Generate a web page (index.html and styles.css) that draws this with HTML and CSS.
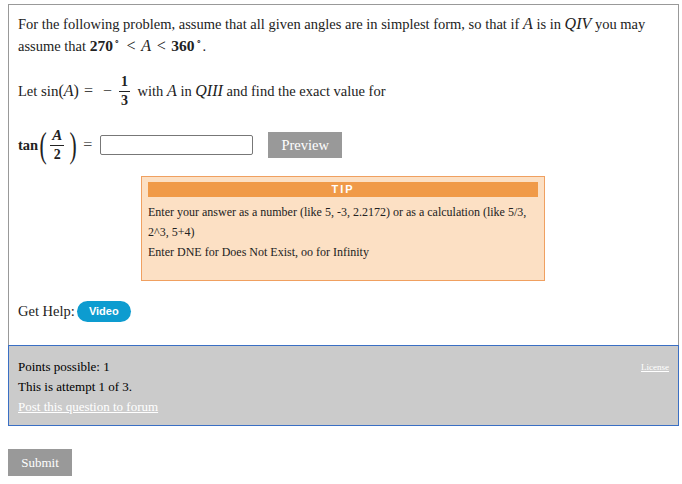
FILE: index.html
```html
<!DOCTYPE html>
<html>
<head>
<meta charset="utf-8">
<link rel="stylesheet" href="styles.css">
</head>
<body>
<div class="question">
  <div class="qbody">
    <p class="intro">For the following problem, assume that all given angles are in simplest form, so that if <i class="mv">A</i> is in <i class="mv">QIV</i> you may assume that <b class="mn">270</b><span class="deg">∘</span> <span class="mo">&lt;</span> <i class="mv">A</i> <span class="mo">&lt;</span> <b class="mn">360</b><span class="deg">∘</span>.</p>
    <p class="let">Let <span class="mf">sin</span><span class="mp">(</span><i class="mv">A</i><span class="mp">)</span> <span class="mo lo">=</span> <span class="mo lo">−</span><span class="frac"><span class="num">1</span><span class="den">3</span></span> with <i class="mv">A</i> in <i class="mv">QIII</i> and find the exact value for</p>
    <div class="answer">
      <span class="mf">tan</span><span class="bigp">(</span><span class="frac"><i class="num mv">A</i><span class="den">2</span></span><span class="bigp">)</span>
      <span class="mo eq">=</span>
      <input class="ans" type="text">
      <button class="preview">Preview</button>
    </div>
    <div class="tip">
      <div class="tiphead">TIP</div>
      <div class="tiptext">Enter your answer as a number (like 5, -3, 2.2172) or as a calculation (like 5/3, 2^3, 5+4)<br>Enter DNE for Does Not Exist, oo for Infinity</div>
    </div>
    <div class="help">Get Help: <span class="video">Video</span></div>
  </div>
  <div class="footer">
    <div class="frow"><span>Points possible: 1</span><a class="license" href="#">License</a></div>
    <div class="frow">This is attempt 1 of 3.</div>
    <div class="frow"><a class="forum" href="#">Post this question to forum</a></div>
  </div>
</div>
<button class="submit">Submit</button>
</body>
</html>
```
FILE: styles.css
```css
html, body { background: #fff; }
body {
  margin: 4px 3px 0 8px;
  font-family: "Liberation Serif", "Times New Roman", serif;
  font-size: 14.5px;
  color: #222;
}
.question {
  width: 671px;
  box-sizing: border-box;
}
.qbody {
  border: 1px solid #999;
  border-bottom: none;
  padding: 8px 9px 24px 9px;
}
p { margin: 0; }
.intro { line-height: 22px; }
.let { margin-top: 17px; line-height: 34px; display: flex; align-items: center; white-space: pre; }
.mv { font-style: italic; font-size: 16px; font-family: "Liberation Serif", serif; }
.mn { font-weight: bold; font-size: 15.5px; }
.mo { font-size: 16px; padding: 0 2px; }
.mo.lo { padding: 0 5px; color: #444; }
.mf { font-size: 15px; }
.mp { font-size: 16px; }
.deg { font-size: 9px; line-height: 1; vertical-align: 6px; margin: 0 1px; }
.frac {
  display: inline-flex;
  flex-direction: column;
  align-items: center;
  vertical-align: middle;
  line-height: 1;
  margin: 0 4px 0 2px;
}
.frac .num { font-weight: bold; font-size: 14px; padding: 0 2px 2px; border-bottom: 1px solid #222; }
.frac .den { font-weight: bold; font-size: 14px; padding-top: 2px; }
.frac i.num { font-size: 15px; font-weight: bold; }
.answer {
  margin-top: 17px;
  display: flex;
  align-items: center;
  height: 40px;
}
.answer .mf { font-weight: bold; font-size: 14.5px; }
.bigp { font-size: 36px; line-height: 1; font-weight: 300; transform: scaleX(0.6); display: inline-block; margin: 0 -1px; }
.eq { margin: 0 5px 0 2px; padding: 0 3px; color: #555; }
.ans {
  width: 153px;
  height: 20px;
  box-sizing: border-box;
  border: 1px solid #777;
  border-radius: 2px;
  margin: 0;
  padding: 0;
}
.preview {
  margin-left: 15px;
  width: 74px;
  height: 26px;
  background: #999;
  border: none;
  color: #fff;
  font-family: "Liberation Serif", serif;
  font-size: 14.5px;
  padding: 0;
}
.tip {
  margin: 11px 0 0 123px;
  width: 404px;
  height: 105px;
  box-sizing: border-box;
  background: #fce0c4;
  border: 1px solid #f0a060;
  padding: 5px 6px;
}
.tiphead {
  background: #f09a48;
  color: #fff;
  text-align: center;
  font-family: "Liberation Sans", Arial, sans-serif;
  font-weight: bold;
  font-size: 11px;
  letter-spacing: 2px;
  height: 15px;
  line-height: 15px;
}
.tiptext { font-size: 12px; line-height: 20px; padding-top: 5px; color: #222; }
.help { margin-top: 20px; display: flex; align-items: center; height: 20px; font-size: 14.5px; }
.video {
  margin-left: 2px;
  background: #0d9cd0;
  color: #fff;
  font-family: "Liberation Sans", Arial, sans-serif;
  font-weight: bold;
  font-size: 11px;
  border-radius: 11px;
  width: 54px;
  height: 21px;
  display: inline-flex;
  align-items: center;
  justify-content: center;
}
.footer {
  border: 1px solid #3a6fc4;
  background: #cbcbcb;
  padding: 11px 9px 8px 9px;
  font-size: 13px;
  color: #000;
}
.frow { line-height: 20px; display: flex; justify-content: space-between; }
.license { color: #fff; font-size: 9px; line-height: 20px; }
.forum { color: #fff; }
.submit {
  margin-top: 23px;
  width: 64px;
  height: 27px;
  background: #999;
  border: none;
  color: #fff;
  font-family: "Liberation Serif", serif;
  font-size: 13px;
  padding: 0;
  display: block;
}
```
